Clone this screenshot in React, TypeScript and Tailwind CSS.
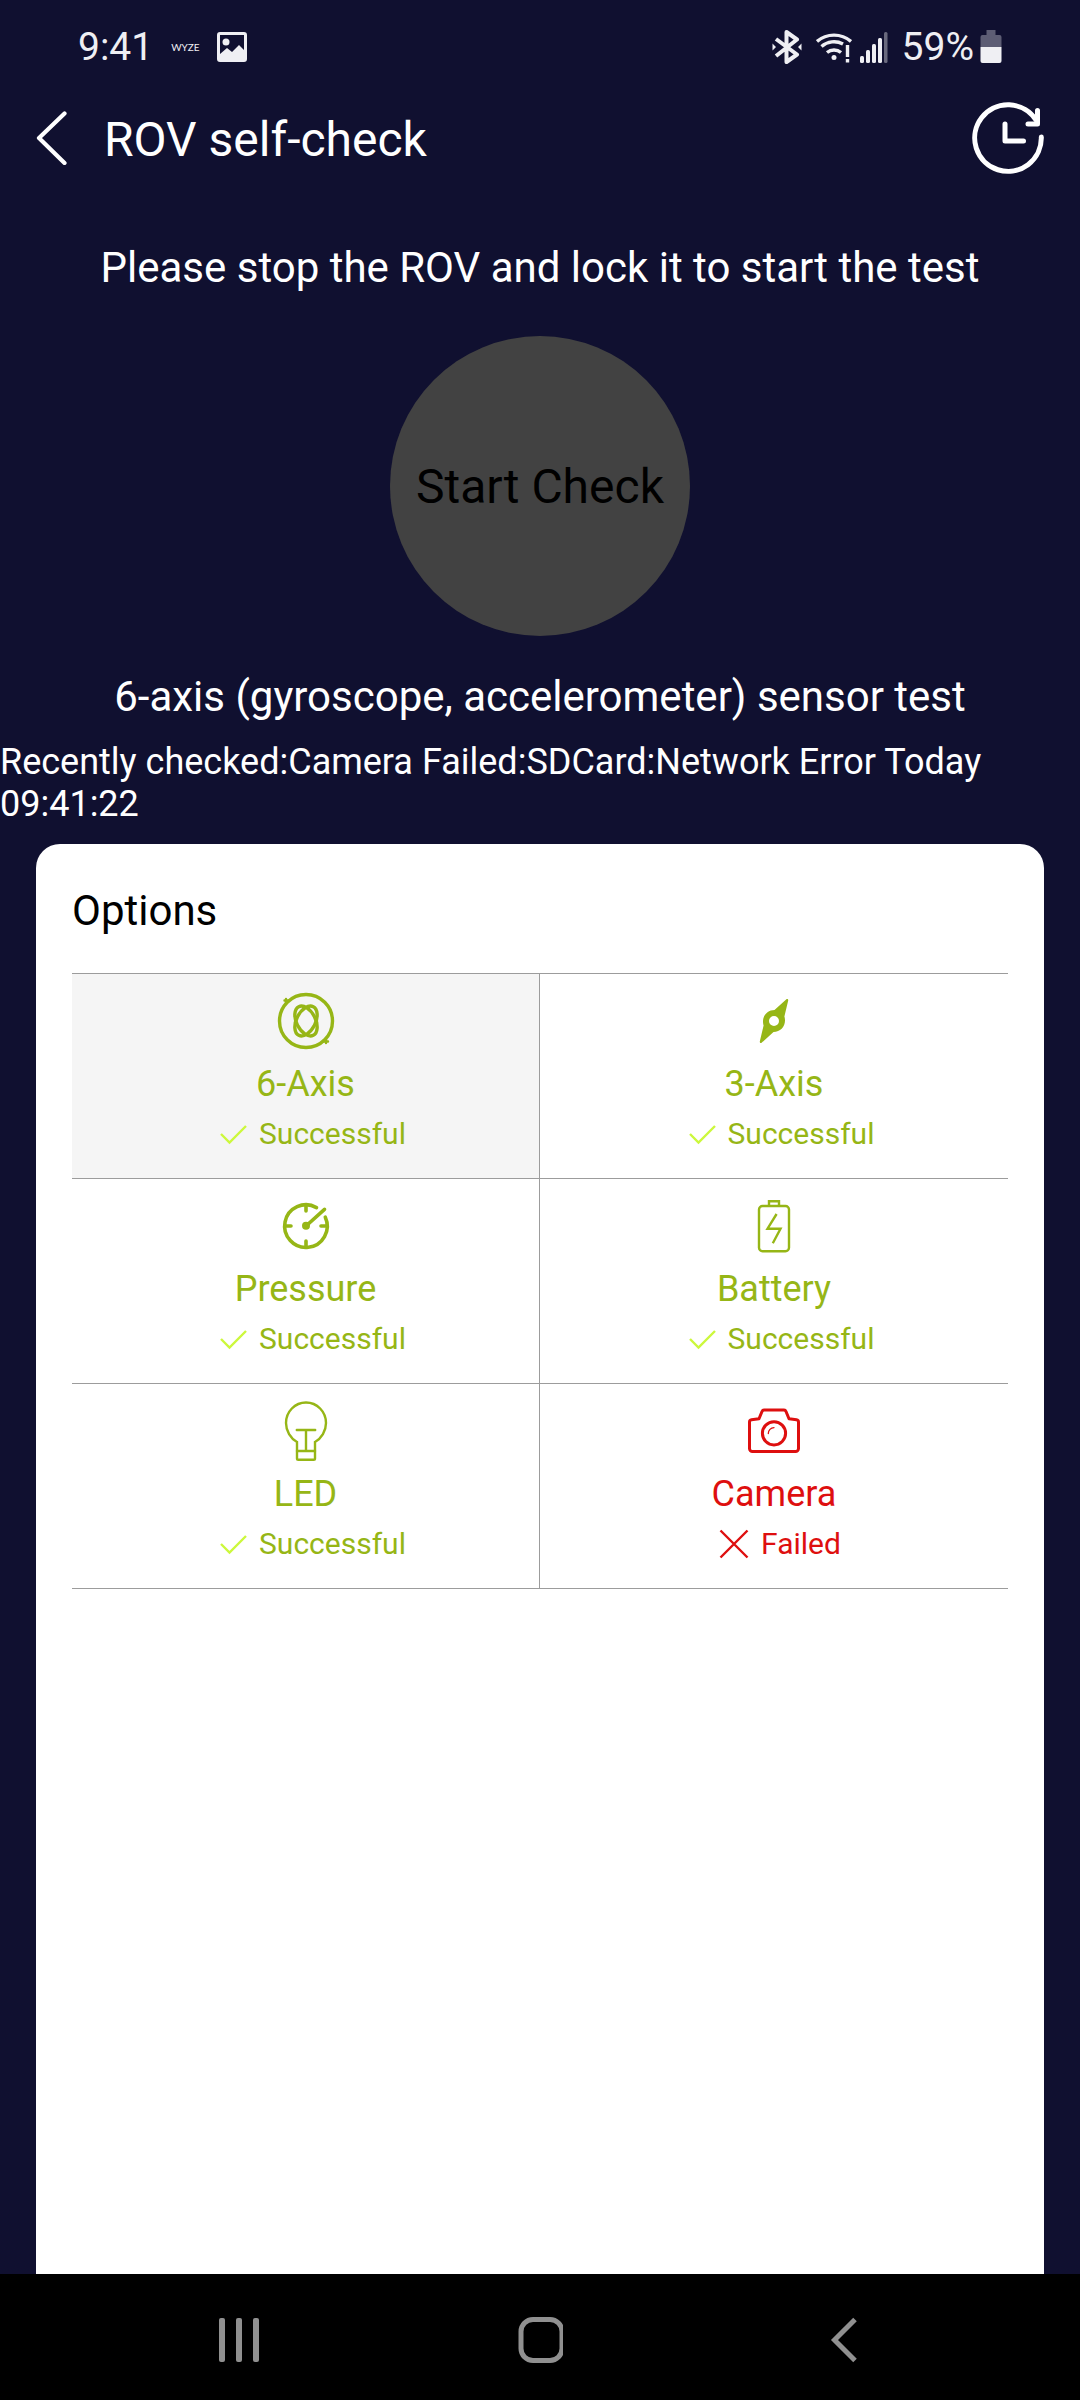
import { useState } from 'react'
import type { ReactNode } from 'react'
import { clsx } from 'clsx'

type CheckItem = {
  name: string
  icon: ReactNode
  passed: boolean
}

const checkItems: CheckItem[] = [
  { name: '6-Axis', icon: <GyroIcon />, passed: true },
  { name: '3-Axis', icon: <CompassIcon />, passed: true },
  { name: 'Pressure', icon: <PressureIcon />, passed: true },
  { name: 'Battery', icon: <BatteryIcon />, passed: true },
  { name: 'LED', icon: <LedIcon />, passed: true },
  { name: 'Camera', icon: <CameraIcon />, passed: false },
]

// Option icons, all on a 60px box
function OptionIcon({ width = 3, children }: { width?: number; children: ReactNode }) {
  return (
    <svg
      viewBox="0 0 60 60"
      className="h-15 w-15 shrink-0"
      fill="none"
      stroke="currentColor"
      strokeWidth={width}
      strokeLinecap="round"
      strokeLinejoin="round"
      aria-hidden="true"
    >
      {children}
    </svg>
  )
}

function GyroIcon() {
  return (
    <OptionIcon width={3.4}>
      <circle cx="30" cy="30" r="26.5" />
      <ellipse cx="30" cy="30" rx="9.5" ry="16" transform="rotate(27 30 30)" />
      <ellipse cx="30" cy="30" rx="9.5" ry="16" transform="rotate(-27 30 30)" />
      <path d="M10 8v4M8.5 9.5h4M50 48v4M48 50.5h4" strokeWidth="2.4" />
    </OptionIcon>
  )
}

function CompassIcon() {
  return (
    <OptionIcon>
      <path
        fill="currentColor"
        stroke="none"
        fillRule="evenodd"
        d="M42.4 8.2L30.5 19C24 19 19 24 19 30.5c0 1.8.3 3 .6 4L15.8 50.5c-.2 1.3.8 1.9 1.8 1.3L29.5 41C36 41 41 36 41 29.500c0-1.8-.3-3-.6-4L44.2 9.500c.2-1.3-.8-1.9-1.8-1.3zM30 25a5 5 0 100 10 5 5 0 000-10z"
      />
    </OptionIcon>
  )
}

function PressureIcon() {
  return (
    <OptionIcon width={3.6}>
      <path d="M40.5 11.6A21.300 21.300 0 1049.300 21.200" />
      <path d="M30 10v5M10 30h5M30 45v5M45 30h5" />
      <path d="M30 30L48.500 13.300" />
      <circle cx="30" cy="29.700" r="4" fill="currentColor" stroke="none" />
    </OptionIcon>
  )
}

function BatteryIcon() {
  return (
    <OptionIcon width={2.4}>
      <rect x="15" y="10" width="30" height="45.300" rx="3.500" />
      <path d="M25 10V5.300h10V10" strokeLinecap="butt" strokeLinejoin="miter" />
      <path d="M32.600 18L23.500 32.700h13L28.800 47.200" strokeLinecap="butt" strokeLinejoin="miter" />
    </OptionIcon>
  )
}

function LedIcon() {
  return (
    <OptionIcon width={2.4}>
      <path d="M21 41C14.500 37.500 10 30 10 22a20 20.500 0 0140 0c0 8-4.500 15.500-11 19v16.500a1.300 1.300 0 01-1.300 1.300H22.300A1.300 1.300 0 0121 57.500z" strokeLinejoin="miter" />
      <path d="M21 50h18M30 29v21M20.800 29h18.400" />
    </OptionIcon>
  )
}

function CameraIcon() {
  return (
    <OptionIcon>
      <path d="M5.500 21c0-1.200.8-2 2-2.200l7.500-1 3-7.300c.4-1 1.100-1.400 2-1.400h20c.9 0 1.600.4 2 1.400l3 7.300 7.500 1c1.200.2 2 1 2 2.200v26.500a3 3 0 01-3 3h-43a3 3 0 01-3-3z" />
      <circle cx="30" cy="32.300" r="11.600" />
      <path d="M24.300 32.500a5.800 5.800 0 015.700-5.900" strokeWidth="1.300" />
    </OptionIcon>
  )
}

function StatusBar() {
  return (
    <div className="flex h-23 items-center justify-between px-[78px] pt-0.5 text-[#efeff3]">
      <div className="flex items-center">
        <span className="text-[39px] leading-12">9:41</span>
        <span className="ml-[18px] font-[Lato] text-[10px] leading-3">WYZE</span>
        <svg viewBox="0 0 32 32" className="ml-4 h-8 w-8" fill="currentColor" aria-hidden="true">
          <path
            fillRule="evenodd"
            d="M4 1h24a3 3 0 013 3v24a3 3 0 01-3 3H4a3 3 0 01-3-3V4a3 3 0 013-3zm0 3v19l7-6 5 4 7-7 5 5V4z"
          />
          <circle cx="10" cy="11" r="3.500" />
        </svg>
      </div>
      <div className="flex items-center">
        <svg viewBox="0 0 30 34" className="h-[34px] w-[30px]" fill="none" stroke="currentColor" strokeWidth="4" strokeLinejoin="round" aria-hidden="true">
          <path d="M4 9l21 15.500-10.500 7.500V2L25 9.500 4 26" />
          <path d="M.5 13.500v7l3.500-3.500zM29.500 13.500v7L26 17z" fill="currentColor" stroke="none" />
        </svg>
        <svg viewBox="0 0 36 34" className="ml-[14px] h-[34px] w-9" fill="none" stroke="currentColor" strokeWidth="3.400" aria-hidden="true">
          <path d="M1 11.500a26 26 0 0134 0M5.500 16.500a19 19 0 0121.500-2.500M11 22.500a11 11 0 0114 0" />
          <circle cx="18" cy="27.500" r="2.500" fill="currentColor" stroke="none" />
          <path d="M31.500 15v12M31.500 29v3.500" />
        </svg>
        <svg viewBox="0 0 28 34" className="ml-2 h-[34px] w-7" fill="currentColor" aria-hidden="true">
          <rect x="0" y="26" width="4" height="7" rx="1.500" />
          <rect x="6" y="20" width="4" height="13" rx="1.500" />
          <rect x="12" y="14" width="4" height="19" rx="1.500" />
          <rect x="18" y="8" width="4" height="25" rx="1.500" />
          <rect x="24" y="2" width="3.500" height="31" rx="1.500" opacity="0.400" />
        </svg>
        <span className="ml-[14px] text-[39px] leading-12">59%</span>
        <svg viewBox="0 0 22 34" className="ml-[6px] h-[34px] w-[22px]" fill="currentColor" aria-hidden="true">
          <path d="M6.500 0h9v5h4a2 2 0 012 2v10h-21V7a2 2 0 012-2h4z" opacity="0.350" />
          <path d="M.5 17h21v14a2 2 0 01-2 2h-17a2 2 0 01-2-2z" />
        </svg>
      </div>
    </div>
  )
}

function Header() {
  return (
    <header className="flex h-23 items-center px-9 text-white">
      <button type="button" aria-label="Back" className="mr-9">
        <svg viewBox="0 0 32 54" className="h-[54px] w-8" fill="none" stroke="currentColor" strokeWidth="4.200" strokeLinecap="round" strokeLinejoin="round">
          <path d="M28.500 2.500L3 27l25.500 25" />
        </svg>
      </button>
      <h1 className="flex-1 pt-1 text-[48px] leading-14">ROV self-check</h1>
      <button type="button" aria-label="Check history">
        <svg viewBox="0 0 72 72" className="h-18 w-18" fill="none" stroke="currentColor" strokeWidth="5" strokeLinecap="round" strokeLinejoin="round">
          <path d="M69.300 35A33.300 33.300 0 1164 18" />
          <path d="M65.500 8.500v13.500H56" />
          <path d="M33 22v17h18.500" />
        </svg>
      </button>
    </header>
  )
}

function NavigationBar() {
  return (
    <nav className="grid h-[126px] grid-cols-[1fr_auto_1fr] items-center bg-black px-[218px] pt-[6px] text-[#909090]">
      <button type="button" aria-label="Recent apps" className="justify-self-start">
        <svg viewBox="0 0 42 46" className="h-[46px] w-[42px]" fill="currentColor">
          <rect x="1" y="1" width="6" height="44" rx="2" />
          <rect x="18" y="1" width="6" height="44" rx="2" />
          <rect x="35" y="1" width="6" height="44" rx="2" />
        </svg>
      </button>
      <button type="button" aria-label="Home">
        <svg viewBox="0 0 46 46" className="h-[46px] w-[46px]" fill="none" stroke="currentColor" strokeWidth="5">
          <rect x="4" y="2.500" width="41" height="41" rx="12" />
        </svg>
      </button>
      <button type="button" aria-label="Back" className="justify-self-end">
        <svg viewBox="0 0 32 46" className="h-[46px] w-8" fill="none" stroke="currentColor" strokeWidth="5">
          <path d="M25 2.500L4.500 23 25 43.500" />
        </svg>
      </button>
    </nav>
  )
}

function CheckCell({
  item,
  selected,
  onSelect,
}: {
  item: CheckItem
  selected: boolean
  onSelect: () => void
}) {
  return (
    <button
      type="button"
      aria-pressed={selected}
      onClick={onSelect}
      className={clsx(
        'flex h-[205px] flex-col items-center gap-3 border-b border-[#9c9c9c] pt-[17px] odd:border-r',
        item.passed ? 'text-[#96b616]' : 'text-[#de0f0f]',
        selected && 'bg-[#f5f5f5]'
      )}
    >
      {item.icon}
      <span className="text-[36px] leading-[42px]">{item.name}</span>
      <span className="flex items-center text-[30px] leading-[34px]">
        {item.passed ? (
          <svg viewBox="0 0 54 34" className="h-[34px] w-[54px]" fill="none" stroke="#ccf83c" strokeWidth="2.400" aria-hidden="true">
            <path d="M16 17l8.500 8.500L41 9" />
          </svg>
        ) : (
          <svg viewBox="0 0 54 34" className="h-[34px] w-[54px]" fill="none" stroke="currentColor" strokeWidth="2.400" aria-hidden="true">
            <path d="M13.500 3.500l27 27M40.500 3.500l-27 27" />
          </svg>
        )}
        {item.passed ? 'Successful' : 'Failed'}
      </span>
    </button>
  )
}

export default function App() {
  const [selected, setSelected] = useState('6-Axis')

  return (
    <div className="flex min-h-screen flex-col bg-[#101030] font-[Roboto,sans-serif]">
      <StatusBar />
      <Header />

      <main className="flex flex-1 flex-col text-white">
        <p className="mt-15 text-center text-[42px] leading-12">
          Please stop the ROV and lock it to start the test
        </p>
        <button
          type="button"
          disabled
          className="mt-11 h-75 w-75 self-center rounded-full bg-[#424242] pt-0.5 text-[48px] leading-14 text-black"
        >
          Start Check
        </button>
        <p className="mt-[37px] text-center text-[42px] leading-12">
          6-axis (gyroscope, accelerometer) sensor test
        </p>
        <p className="mt-5 text-[36px] leading-[42px]">
          Recently checked:Camera Failed:SDCard:Network Error Today 09:41:22
        </p>

        {/* Options */}
        <section className="mx-9 mt-[19px] flex-1 rounded-t-3xl bg-white px-9 pt-[43px]">
          <h2 className="text-[42px] leading-12 text-black">Options</h2>
          <div className="mt-[38px] grid grid-cols-2 border-t border-[#9c9c9c]">
            {checkItems.map((item) => (
              <CheckCell
                key={item.name}
                item={item}
                selected={selected === item.name}
                onSelect={() => setSelected(item.name)}
              />
            ))}
          </div>
        </section>
      </main>

      <NavigationBar />
    </div>
  )
}
